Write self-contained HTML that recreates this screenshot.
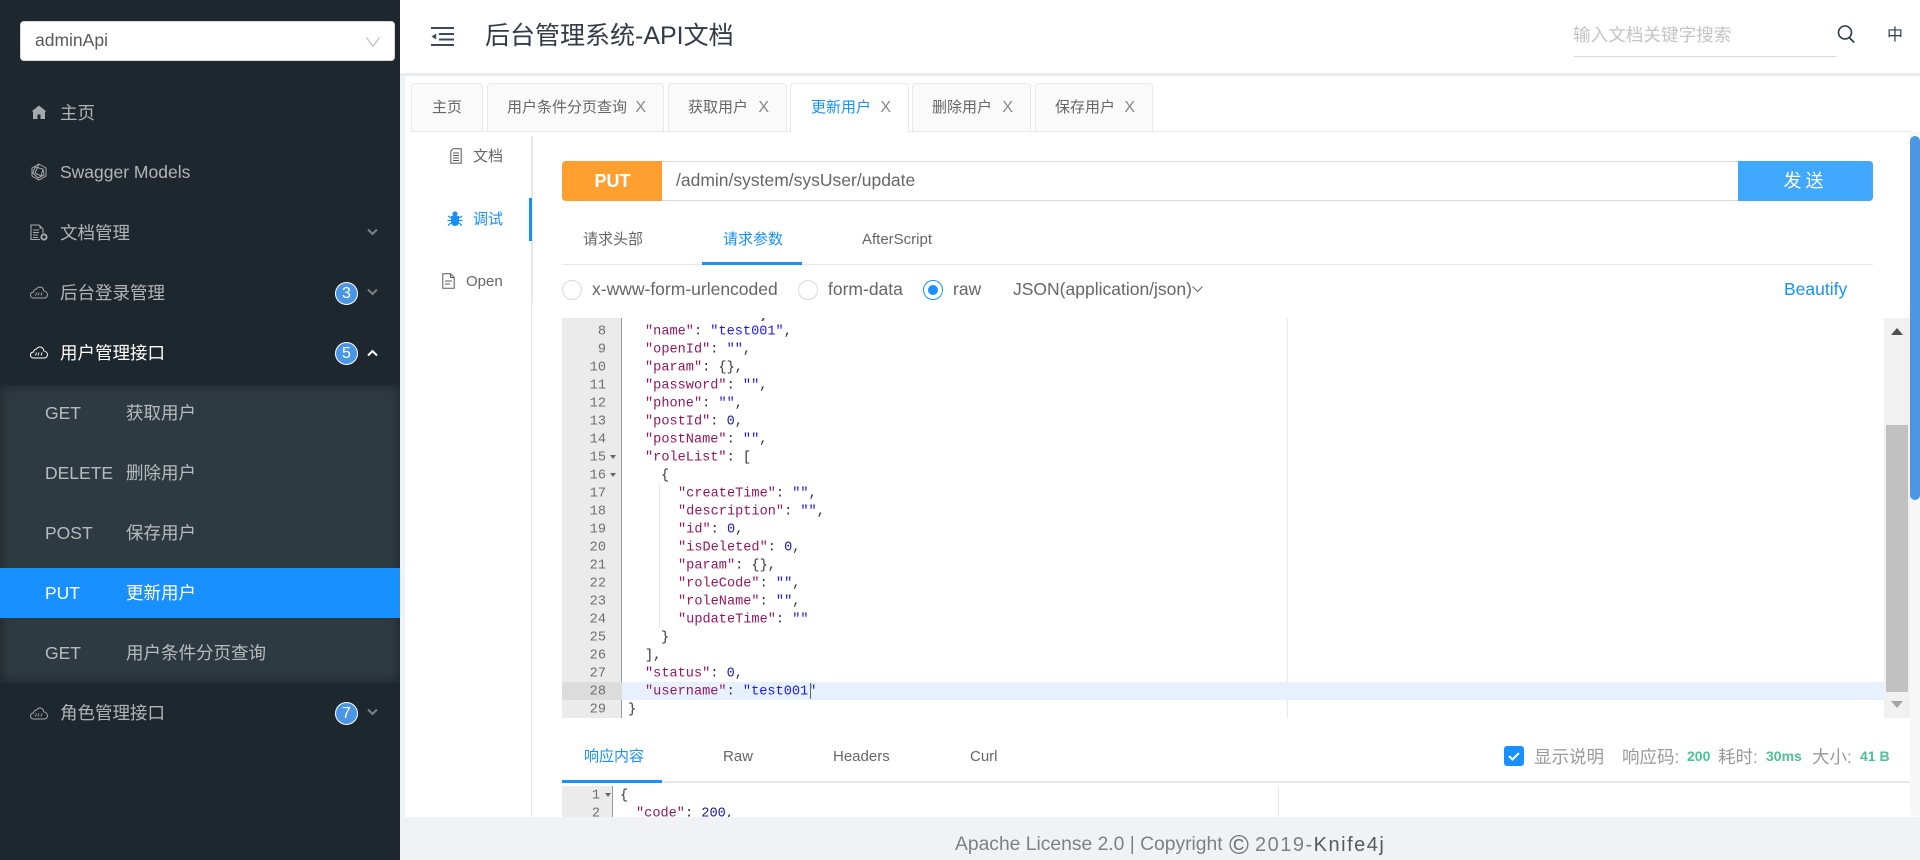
<!DOCTYPE html>
<html lang="zh"><head><meta charset="utf-8"><title>后台管理系统-API文档</title>
<style>
*{box-sizing:border-box}
html,body{margin:0;padding:0;width:1920px;height:860px;overflow:hidden;background:#f0f2f5;font-family:"Liberation Sans","Noto Sans CJK SC",sans-serif;}
.a,.t{position:absolute}
.t{line-height:20px;height:20px;white-space:nowrap;font-size:17.5px}
.side{left:0;top:0;width:400px;height:860px;background:#1f272e}
.m{color:rgba(255,255,255,.65)}
.sub{left:0;top:385px;width:400px;height:298px;background:#2e3a41;box-shadow:inset 0 0 12px rgba(0,0,0,.4)}
.sv{color:rgba(255,255,255,.65)}
.badge{width:23px;height:23px;border-radius:50%;background:#4a96e6;border:1px solid #fff;color:#fff;font-size:16px;line-height:21px;text-align:center;left:335px}
.tab{top:83px;height:49px;background:#fafafa;border:1px solid #e8e8e8;border-radius:4px 4px 0 0;color:#666;font-size:15px;line-height:48px;white-space:nowrap}
.tab i{font-style:normal;font-size:16px;color:#888;position:absolute;right:17px;top:0;font-weight:400}
.tab b{font-weight:400;position:absolute;top:0}
.g{color:#999}
.radio{width:20px;height:20px;border-radius:50%;border:1px solid #d9d9d9;background:#fff;top:280px}
.code{font-family:"Liberation Mono","DejaVu Sans Mono",monospace;font-size:13.6px;line-height:18px;height:18px;white-space:pre;position:absolute;color:#333;transform:translateY(1.500px)}
.ln{font-family:"Liberation Mono","DejaVu Sans Mono",monospace;font-size:13.6px;line-height:18px;height:18px;position:absolute;color:#707070;text-align:right;width:44px;left:562px;transform:translateY(1.500px)}
.k{color:#92185f}.s{color:#1a1aee}.n{color:#1a1a9e}
.fold{position:absolute;left:610px;width:0;height:0;border:3px solid transparent;border-top:4px solid #666;border-bottom:0}
</style></head><body>

<div class="a" style="left:405px;top:76px;width:1515px;height:741px;background:#fff"></div>

<!-- header -->
<div class="a" style="left:400px;top:0;width:1520px;height:73px;background:#fff"></div>
<div class="a" style="left:400px;top:73px;width:1520px;height:3px;background:#e9edf2"></div>
<svg class="a" style="left:431px;top:26px" width="24" height="22" viewBox="0 0 24 22"><g fill="#3c4a5c"><rect x="0" y="1" width="23" height="2"/><rect x="8" y="7" width="15" height="2"/><rect x="8" y="12.500" width="15" height="2"/><rect x="0" y="18" width="23" height="2"/><path d="M5.200 7.500v6L.5 10.500z"/></g></svg>
<div class="t" style="left:485px;top:19px;height:34px;line-height:34px;font-size:25px;color:#333b47">后台管理系统-API文档</div>
<div class="t" style="left:1573px;top:25px;color:#c4c4c4;font-size:17.600px;height:20px;line-height:20px">输入文档关键字搜索</div>
<div class="a" style="left:1574px;top:56px;width:262px;height:1px;background:#d9d9d9"></div>
<svg class="a" style="left:1835px;top:24px" width="22" height="22" viewBox="0 0 22 22" fill="none" stroke="#2b3645" stroke-width="1.600"><circle cx="10" cy="8.500" r="6.500"/><path d="M14.200 13.500l5 5"/></svg>
<div class="t" style="left:1887px;top:26px;color:#2f3e50;font-size:16px">中</div>

<!-- sidebar -->
<div class="a side"></div>
<div class="a" style="left:20px;top:21px;width:375px;height:40px;background:#fff;border-radius:4px;border:1px solid #d9d9d9"></div>
<div class="t" style="left:35px;top:30px;color:#595959">adminApi</div>
<svg class="a" style="left:365px;top:35px" width="16" height="14" viewBox="0 0 16 14" fill="none" stroke="#bfbfbf" stroke-width="1.200"><path d="M1.500 2.500L8 11.500 14.500 2.500"/></svg>

<svg class="a" style="left:31px;top:105px" width="16" height="16" viewBox="0 0 16 16"><path fill="#a5a9ac" fill-rule="evenodd" d="M8 .5L.5 6.500H2V14h12V6.500h1.500zM6.500 14V9.500h3V14z"/></svg>
<div class="t m" style="left:60px;top:103px">主页</div>
<svg class="a" style="left:30px;top:163px" width="18" height="18" viewBox="0 0 18 18" fill="none" stroke="#a5a9ac" stroke-width="1"><path d="M9 1l7 4v8l-7 4-7-4V5z"/><path d="M5 4l8 2 1 6-6 3-5-5z M9 1L5 10l6 3 2-7"/></svg>
<div class="t m" style="left:60px;top:162px">Swagger Models</div>
<svg class="a" style="left:30px;top:224px" width="19" height="18" viewBox="0 0 19 18" fill="none" stroke="#a5a9ac" stroke-width="1.100"><path d="M10 15.500H1V1h8l4 4v4"/><path d="M3 6h6M3 8.500h6M3 11h5M3 13.500h5"/><path fill="#a5a9ac" stroke="none" d="M9.500 1v3.500H13z"/><circle cx="14" cy="13" r="2.600" stroke-width="2"/></svg>
<div class="t m" style="left:60px;top:223px">文档管理</div>
<svg class="a" style="left:367px;top:228px" width="11" height="8" viewBox="0 0 11 8" fill="none" stroke="#7b8084" stroke-width="2"><path d="M1 1.500l4.500 4.500L10 1.500"/></svg>

<svg class="a" style="left:30px;top:286px" width="18" height="13" viewBox="0 0 18 13" fill="none" stroke="#a5a9ac" stroke-width="1"><path d="M4.500 12H3.500C1.500 12 .5 10.500.5 9S1.500 6.200 3.500 6C4 4 5 3 6.500 3 7.500 1.500 9 .8 10.500 1c2 .3 3 1.800 3.200 3.800 2 .5 3.800 2 3.800 4C17.500 10.800 16 12 14.500 12z"/><path stroke-width=".9" d="M5.500 9.500l1-3M8 9.500l1-3M11 9.500l1-3"/></svg>
<div class="t m" style="left:60px;top:283px">后台登录管理</div>
<div class="a badge" style="top:282px">3</div>
<svg class="a" style="left:367px;top:288px" width="11" height="8" viewBox="0 0 11 8" fill="none" stroke="#7b8084" stroke-width="2"><path d="M1 1.500l4.500 4.500L10 1.500"/></svg>

<svg class="a" style="left:30px;top:346px" width="18" height="13" viewBox="0 0 18 13" fill="none" stroke="#fff" stroke-width="1"><path d="M4.500 12H3.500C1.500 12 .5 10.500.5 9S1.500 6.200 3.500 6C4 4 5 3 6.500 3 7.500 1.500 9 .8 10.500 1c2 .3 3 1.800 3.200 3.800 2 .5 3.800 2 3.800 4C17.500 10.800 16 12 14.500 12z"/><path stroke-width=".9" d="M5.500 9.500l1-3M8 9.500l1-3M11 9.500l1-3"/></svg>
<div class="t" style="left:60px;top:343px;color:#fff">用户管理接口</div>
<div class="a badge" style="top:342px">5</div>
<svg class="a" style="left:367px;top:349px" width="11" height="8" viewBox="0 0 11 8" fill="none" stroke="#fff" stroke-width="2"><path d="M1 6.500L5.500 2 10 6.500"/></svg>

<div class="a sub"></div>
<div class="t sv" style="left:45px;top:403px">GET</div><div class="t sv" style="left:126px;top:403px">获取用户</div>
<div class="t sv" style="left:45px;top:463px">DELETE</div><div class="t sv" style="left:126px;top:463px">删除用户</div>
<div class="t sv" style="left:45px;top:523px">POST</div><div class="t sv" style="left:126px;top:523px">保存用户</div>
<div class="a" style="left:0;top:568px;width:400px;height:50px;background:#1890ff"></div>
<div class="t" style="left:45px;top:583px;color:#fff">PUT</div><div class="t" style="left:126px;top:583px;color:#fff">更新用户</div>
<div class="t sv" style="left:45px;top:643px">GET</div><div class="t sv" style="left:126px;top:643px">用户条件分页查询</div>

<svg class="a" style="left:30px;top:707px" width="18" height="13" viewBox="0 0 18 13" fill="none" stroke="#a5a9ac" stroke-width="1"><path d="M4.500 12H3.500C1.500 12 .5 10.500.5 9S1.500 6.200 3.500 6C4 4 5 3 6.500 3 7.500 1.500 9 .8 10.500 1c2 .3 3 1.800 3.200 3.800 2 .5 3.800 2 3.800 4C17.500 10.800 16 12 14.500 12z"/><path stroke-width=".9" d="M5.500 9.500l1-3M8 9.500l1-3M11 9.500l1-3"/></svg>
<div class="t m" style="left:60px;top:703px">角色管理接口</div>
<div class="a badge" style="top:702px">7</div>
<svg class="a" style="left:367px;top:708px" width="11" height="8" viewBox="0 0 11 8" fill="none" stroke="#7b8084" stroke-width="2"><path d="M1 1.500l4.500 4.500L10 1.500"/></svg>

<!-- tabs -->
<div class="a" style="left:411px;top:131px;width:1499px;height:1px;background:#e8e8e8"></div>
<div class="a tab" style="left:411px;width:72px"><b style="left:20px">主页</b></div>
<div class="a tab" style="left:487px;width:177px"><b style="left:19px">用户条件分页查询</b><i>X</i></div>
<div class="a tab" style="left:668px;width:119px"><b style="left:19px">获取用户</b><i>X</i></div>
<div class="a tab" style="left:790px;width:119px;background:#fff;color:#1890ff;height:50px;border-bottom:0"><b style="left:20px">更新用户</b><i>X</i></div>
<div class="a tab" style="left:912px;width:119px"><b style="left:19px">删除用户</b><i>X</i></div>
<div class="a tab" style="left:1035px;width:118px"><b style="left:19px">保存用户</b><i>X</i></div>

<!-- left vertical tabs -->
<div class="a" style="left:531px;top:136px;width:2px;height:167px;background:#e8e8e8"></div>
<div class="a" style="left:531px;top:303px;width:1px;height:514px;background:#e8e8e8"></div>
<div class="a" style="left:529px;top:198px;width:3px;height:43px;background:#1890ff"></div>
<svg class="a" style="left:450px;top:148px" width="12" height="16" viewBox="0 0 12 16" fill="none" stroke="#595959" stroke-width="1"><path d="M3 .8h8.200v14.400H.8V3z"/><path d="M3 5h6M3 7.500h6M3 10h6M3 12.500h6"/></svg>
<div class="t" style="left:473px;top:147px;font-size:15px;color:#666">文档</div>
<svg class="a" style="left:447px;top:211px" width="16" height="16" viewBox="0 0 16 16"><g fill="#1890ff"><path d="M4 5h8v6c0 2.500-1.800 4-4 4s-4-1.500-4-4z"/><circle cx="8" cy="3" r="2.600"/></g><path fill="none" stroke="#1890ff" stroke-width="1.200" d="M1 5l3 2M15 5l-3 2M.5 9.500h3.500M15.500 9.500H12M1 14.500l3-2.500M15 14.500l-3-2.500"/></svg>
<div class="t" style="left:473px;top:210px;font-size:15px;color:#1890ff">调试</div>
<svg class="a" style="left:442px;top:273px" width="13" height="16" viewBox="0 0 13 16" fill="none" stroke="#595959" stroke-width="1"><path d="M.8.8h7.700l3.700 3.700v10.700H.8z"/><path d="M8.500.8v3.700h3.700"/><path d="M3 8h7M3 11h5"/></svg>
<div class="t" style="left:466px;top:272px;font-size:15px;color:#666">Open</div>

<!-- url bar -->
<div class="a" style="left:562px;top:161px;width:1311px;height:40px;border:1px solid #d9d9d9;border-radius:4px;background:#fff"></div>
<div class="a" style="left:562px;top:161px;width:100px;height:40px;background:#ff9f2f;border-radius:4px 0 0 4px;color:#fff;font-weight:700;font-size:18px;line-height:40px;text-align:center;padding-left:1px">PUT</div>
<div class="t" style="left:676px;top:170px;color:#666">/admin/system/sysUser/update</div>
<div class="a" style="left:1738px;top:161px;width:135px;height:40px;background:#40a9ff;border-radius:0 4px 4px 0;color:#fff;font-size:18px;line-height:40px;text-align:center;letter-spacing:4px;box-shadow:0 2px 0 rgba(0,0,0,.015)">发送</div>

<!-- request tabs -->
<div class="a" style="left:562px;top:264px;width:1311px;height:1px;background:#e8e8e8"></div>
<div class="a" style="left:702px;top:262px;width:100px;height:3px;background:#1890ff"></div>
<div class="t" style="left:583px;top:230px;font-size:15px;color:#666">请求头部</div>
<div class="t" style="left:723px;top:230px;font-size:15px;color:#1890ff">请求参数</div>
<div class="t" style="left:862px;top:230px;font-size:15px;color:#666">AfterScript</div>

<!-- radios -->
<div class="a radio" style="left:562px"></div>
<div class="t" style="left:592px;top:279px;color:#666">x-www-form-urlencoded</div>
<div class="a radio" style="left:798px"></div>
<div class="t" style="left:828px;top:279px;color:#666">form-data</div>
<div class="a radio" style="left:923px;border-color:#1890ff"></div>
<div class="a" style="left:928px;top:285px;width:10px;height:10px;border-radius:50%;background:#1890ff"></div>
<div class="t" style="left:953px;top:279px;color:#666">raw</div>
<div class="t" style="left:1013px;top:279px;color:#666">JSON(application/json)</div>
<svg class="a" style="left:1192px;top:285px" width="11" height="8" viewBox="0 0 11 8" fill="none" stroke="#666" stroke-width="1"><path d="M.5 1.500l5 5 5-5"/></svg>
<div class="t" style="left:1784px;top:279px;color:#1890ff">Beautify</div>

<!-- request editor -->
<div class="a" style="left:562px;top:318px;width:1322px;height:400px;background:#fff;overflow:hidden" id="ed1">
  <div class="a" style="left:0;top:0;width:60px;height:400px;background:#ebebeb"></div>
  <div class="a" style="left:59px;top:0;width:1px;height:400px;background:#999"></div>
  <div class="a" style="left:725px;top:0;width:1px;height:400px;background:#e8e8e8"></div>
  <div class="a" style="left:0;top:364px;width:60px;height:18px;background:#dcdcdc"></div>
  <div class="a" style="left:60px;top:364px;width:1262px;height:18px;background:#e6f1fd"></div>
  <div class="a" style="left:97px;top:166px;width:1px;height:144px;background:#e8e8e8"></div>
</div>
<div class="a" style="left:762px;top:318px;width:3px;height:3px;"><span style="display:block;width:2px;height:3px;background:#555;transform:skewX(-25deg)"></span></div>

<div class="ln" style="top:322px">8</div><div class="code" style="left:645px;top:322px"><span class="k">"name"</span>: <span class="s">"test001"</span>,</div>
<div class="ln" style="top:340px">9</div><div class="code" style="left:645px;top:340px"><span class="k">"openId"</span>: <span class="s">""</span>,</div>
<div class="ln" style="top:358px">10</div><div class="code" style="left:645px;top:358px"><span class="k">"param"</span>: {},</div>
<div class="ln" style="top:376px">11</div><div class="code" style="left:645px;top:376px"><span class="k">"password"</span>: <span class="s">""</span>,</div>
<div class="ln" style="top:394px">12</div><div class="code" style="left:645px;top:394px"><span class="k">"phone"</span>: <span class="s">""</span>,</div>
<div class="ln" style="top:412px">13</div><div class="code" style="left:645px;top:412px"><span class="k">"postId"</span>: <span class="n">0</span>,</div>
<div class="ln" style="top:430px">14</div><div class="code" style="left:645px;top:430px"><span class="k">"postName"</span>: <span class="s">""</span>,</div>
<div class="ln" style="top:448px">15</div><div class="code" style="left:645px;top:448px"><span class="k">"roleList"</span>: [</div><div class="fold" style="top:455px"></div>
<div class="ln" style="top:466px">16</div><div class="code" style="left:661px;top:466px">{</div><div class="fold" style="top:473px"></div>
<div class="ln" style="top:484px">17</div><div class="code" style="left:678px;top:484px"><span class="k">"createTime"</span>: <span class="s">""</span>,</div>
<div class="ln" style="top:502px">18</div><div class="code" style="left:678px;top:502px"><span class="k">"description"</span>: <span class="s">""</span>,</div>
<div class="ln" style="top:520px">19</div><div class="code" style="left:678px;top:520px"><span class="k">"id"</span>: <span class="n">0</span>,</div>
<div class="ln" style="top:538px">20</div><div class="code" style="left:678px;top:538px"><span class="k">"isDeleted"</span>: <span class="n">0</span>,</div>
<div class="ln" style="top:556px">21</div><div class="code" style="left:678px;top:556px"><span class="k">"param"</span>: {},</div>
<div class="ln" style="top:574px">22</div><div class="code" style="left:678px;top:574px"><span class="k">"roleCode"</span>: <span class="s">""</span>,</div>
<div class="ln" style="top:592px">23</div><div class="code" style="left:678px;top:592px"><span class="k">"roleName"</span>: <span class="s">""</span>,</div>
<div class="ln" style="top:610px">24</div><div class="code" style="left:678px;top:610px"><span class="k">"updateTime"</span>: <span class="s">""</span></div>
<div class="ln" style="top:628px">25</div><div class="code" style="left:661px;top:628px">}</div>
<div class="ln" style="top:646px">26</div><div class="code" style="left:645px;top:646px">],</div>
<div class="ln" style="top:664px">27</div><div class="code" style="left:645px;top:664px"><span class="k">"status"</span>: <span class="n">0</span>,</div>
<div class="ln" style="top:682px">28</div><div class="code" style="left:645px;top:682px"><span class="k">"username"</span>: <span class="s">"test001"</span></div>
<div class="a" style="left:810px;top:683px;width:1px;height:16px;background:#666"></div>
<div class="ln" style="top:700px">29</div><div class="code" style="left:628px;top:700px">}</div>

<!-- editor scrollbar -->
<div class="a" style="left:1884px;top:318px;width:26px;height:400px;background:#f1f1f1"></div>
<div class="a" style="left:1886px;top:425px;width:22px;height:267px;background:#c1c1c1"></div>
<div class="a" style="left:1891px;top:328px;width:0;height:0;border-left:6px solid transparent;border-right:6px solid transparent;border-bottom:7px solid #505050"></div>
<div class="a" style="left:1891px;top:701px;width:0;height:0;border-left:6px solid transparent;border-right:6px solid transparent;border-top:7px solid #a3a3a3"></div>

<!-- response tabs -->
<div class="a" style="left:562px;top:781px;width:1348px;height:2px;background:#e8e8e8"></div>
<div class="a" style="left:562px;top:780px;width:100px;height:3px;background:#1890ff"></div>
<div class="t" style="left:584px;top:747px;font-size:15px;color:#1890ff">响应内容</div>
<div class="t" style="left:723px;top:747px;font-size:15px;color:#666">Raw</div>
<div class="t" style="left:833px;top:747px;font-size:15px;color:#666">Headers</div>
<div class="t" style="left:970px;top:747px;font-size:15px;color:#666">Curl</div>

<div class="a" style="left:1504px;top:746px;width:20px;height:20px;background:#1890ff;border-radius:3px"></div>
<svg class="a" style="left:1504px;top:746px" width="20" height="20" viewBox="0 0 20 20" fill="none" stroke="#fff" stroke-width="2"><path d="M5 10l3.500 3.500L15 7"/></svg>
<div class="t g" style="left:1534px;top:747px">显示说明</div>
<div class="t g" style="left:1622px;top:747px">响应码:</div>
<div class="t" style="left:1687px;top:746px;font-size:14px;font-weight:700;color:#4dc296">200</div>
<div class="t g" style="left:1718px;top:747px">耗时:</div>
<div class="t" style="left:1766px;top:746px;font-size:14px;font-weight:700;color:#4dc296">30ms</div>
<div class="t g" style="left:1812px;top:747px">大小:</div>
<div class="t" style="left:1860px;top:746px;font-size:14px;font-weight:700;color:#4dc296">41 B</div>

<!-- response editor -->
<div class="a" style="left:562px;top:786px;width:50px;height:31px;background:#ebebeb"></div>
<div class="a" style="left:612px;top:786px;width:1px;height:31px;background:#999"></div>
<div class="a" style="left:1278px;top:786px;width:1px;height:31px;background:#e8e8e8"></div>
<div class="ln" style="top:786px;left:556px;width:44px">1</div><div class="fold" style="left:605px;top:793px"></div>
<div class="code" style="left:620px;top:786px">{</div>
<div class="a" style="left:562px;top:804px;width:1348px;height:13px;overflow:hidden">
  <div class="ln" style="top:0;left:-6px;width:44px">2</div>
  <div class="code" style="left:74px;top:0"><span class="k">"code"</span>: <span class="n">200</span>,</div>
</div>

<!-- page scrollbar -->
<div class="a" style="left:1910px;top:132px;width:10px;height:685px;background:#f7f7f7;border-radius:0 0 5px 5px"></div>
<div class="a" style="left:1910px;top:136px;width:10px;height:364px;background:#4a96e2;border-radius:5px"></div>

<!-- footer -->
<div class="a" style="left:400px;top:817px;width:1520px;height:43px;background:#f0f2f5"></div>
<div class="t" style="left:955px;top:833px;height:24px;line-height:24px;font-size:19.300px;color:#808080">Apache License 2.0 | Copyright</div>
<div class="t" style="left:1229px;top:831px;height:28px;line-height:28px;font-size:27px;color:#707070">©</div>
<div class="t" style="left:1255px;top:833px;height:24px;line-height:24px;font-size:20px;letter-spacing:1.500px;color:#808080">2019-<span style="color:#595959">Knife4j</span></div>

</body></html>
